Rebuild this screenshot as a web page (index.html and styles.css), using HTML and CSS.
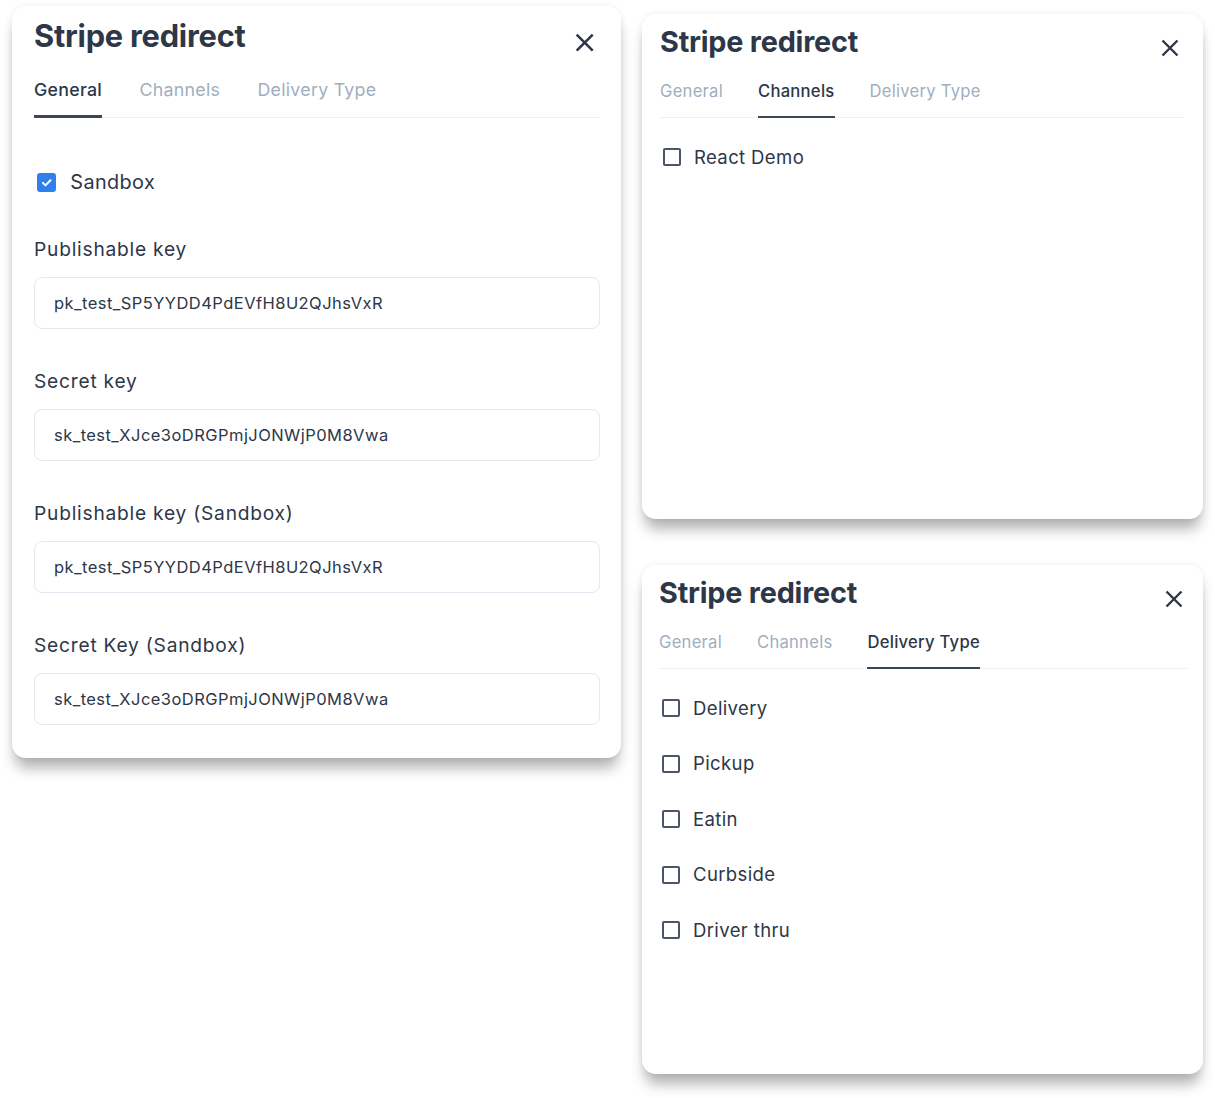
FILE: index.html
```html
<!DOCTYPE html>
<html lang="en">
<head>
<meta charset="utf-8">
<title>Stripe redirect</title>
<link rel="stylesheet" href="styles.css">
</head>
<body>
<div class="canvas">
  <section class="panel panel--lg panel--general">
    <header class="panel-head">
      <h2 class="panel-title">Stripe redirect</h2>
      <button class="close" aria-label="Close">
        <svg viewBox="0 0 20 20" width="100%" height="100%"><path d="M2.5 2.5L17.5 17.5M17.5 2.5L2.5 17.5" stroke="currentColor" stroke-width="2.4" fill="none"/></svg>
      </button>
    </header>
    <nav class="tabs">
      <span class="tab is-active">General</span>
      <span class="tab">Channels</span>
      <span class="tab">Delivery Type</span>
    </nav>
    <div class="general-body">
      <label class="check-row sandbox">
        <span class="check-wrap"><span class="box is-checked">
          <svg viewBox="0 0 12 12" width="100%" height="100%"><path d="M2.6 6.2L5 8.5L9.5 3.8" stroke="#fff" stroke-width="1.8" fill="none" stroke-linecap="round" stroke-linejoin="round"/></svg>
        </span></span>
        <span class="check-text">Sandbox</span>
      </label>
      <div class="fields">
        <div class="field">
          <div class="field-label">Publishable key</div>
          <div class="field-input">pk_test_SP5YYDD4PdEVfH8U2QJhsVxR</div>
        </div>
        <div class="field">
          <div class="field-label">Secret key</div>
          <div class="field-input">sk_test_XJce3oDRGPmjJONWjP0M8Vwa</div>
        </div>
        <div class="field">
          <div class="field-label">Publishable key (Sandbox)</div>
          <div class="field-input">pk_test_SP5YYDD4PdEVfH8U2QJhsVxR</div>
        </div>
        <div class="field">
          <div class="field-label">Secret Key (Sandbox)</div>
          <div class="field-input">sk_test_XJce3oDRGPmjJONWjP0M8Vwa</div>
        </div>
      </div>
    </div>
  </section>

  <div class="stack">
    <section class="panel panel--channels">
      <header class="panel-head">
        <h2 class="panel-title">Stripe redirect</h2>
        <button class="close" aria-label="Close">
          <svg viewBox="0 0 20 20" width="100%" height="100%"><path d="M2.5 2.5L17.5 17.5M17.5 2.5L2.5 17.5" stroke="currentColor" stroke-width="2.4" fill="none"/></svg>
        </button>
      </header>
      <nav class="tabs">
        <span class="tab">General</span>
        <span class="tab is-active">Channels</span>
        <span class="tab">Delivery Type</span>
      </nav>
      <div class="list">
        <label class="check-row"><span class="check-wrap"><span class="box"></span></span><span class="check-text">React Demo</span></label>
      </div>
    </section>

    <section class="panel panel--delivery">
      <header class="panel-head">
        <h2 class="panel-title">Stripe redirect</h2>
        <button class="close" aria-label="Close">
          <svg viewBox="0 0 20 20" width="100%" height="100%"><path d="M2.5 2.5L17.5 17.5M17.5 2.5L2.5 17.5" stroke="currentColor" stroke-width="2.4" fill="none"/></svg>
        </button>
      </header>
      <nav class="tabs">
        <span class="tab">General</span>
        <span class="tab">Channels</span>
        <span class="tab is-active">Delivery Type</span>
      </nav>
      <div class="list">
        <label class="check-row"><span class="check-wrap"><span class="box"></span></span><span class="check-text">Delivery</span></label>
        <label class="check-row"><span class="check-wrap"><span class="box"></span></span><span class="check-text">Pickup</span></label>
        <label class="check-row"><span class="check-wrap"><span class="box"></span></span><span class="check-text">Eatin</span></label>
        <label class="check-row"><span class="check-wrap"><span class="box"></span></span><span class="check-text">Curbside</span></label>
        <label class="check-row"><span class="check-wrap"><span class="box"></span></span><span class="check-text">Driver thru</span></label>
      </div>
    </section>
  </div>
</div>
</body>
</html>
```

FILE: styles.css
```css
* { box-sizing: border-box; }

html, body {
  margin: 0;
  padding: 0;
  background: #ffffff;
}

body {
  width: 1215px;
  height: 1098px;
  overflow: hidden;
  font-family: "Inter", "Noto Sans", sans-serif;
  color: #2d3748;
}

.canvas {
  display: flex;
  align-items: flex-start;
  gap: 21px;
  padding: 6px 0 0 12px;
}

.stack {
  display: flex;
  flex-direction: column;
  gap: 46px;
  width: 561px;
  margin-top: 8px;
}

.panel {
  background: #ffffff;
  border-radius: 14px;
  box-shadow: 0 13px 14px -3px rgba(0, 0, 0, 0.3), 0 0 6px rgba(0, 0, 0, 0.07);
  font-size: 16px;
  padding: 0.375em 19px 0 18px;
}

.panel--lg {
  font-size: 17.1px;
  width: 609px;
  height: 752px;
  padding: 0.375em 21px 0 22px;
}

.panel--channels { height: 505px; }
.panel--delivery { height: 509px; padding-left: 17px; padding-right: 15px; }

.panel-head {
  display: flex;
  justify-content: space-between;
  align-items: flex-start;
}

.panel-title {
  margin: 0;
  font-size: 1.8em;
  line-height: 1.528;
  font-weight: 700;
  letter-spacing: -0.007em;
  color: #2d3748;
}

.close {
  font: inherit;
  border: 0;
  background: none;
  padding: 0;
  width: 1.25em;
  height: 1.25em;
  margin-top: 1.125em;
  margin-right: 0.25em;
  color: #2d3748;
}

.close svg { display: block; }

.tabs {
  display: flex;
  gap: 2.1875em;
  margin-top: 1em;
  border-bottom: 1px solid #edf0f4;
}

.tab {
  font-size: 1.04em;
  letter-spacing: 0.015em;
  line-height: 1.44;
  padding-bottom: 0.72em;
  border-bottom: 0.18em solid transparent;
  margin-bottom: -1px;
  color: #a0aec0;
  font-weight: 400;
}

.tab.is-active {
  color: #2d3748;
  font-weight: 500;
  border-bottom-color: #3b4656;
}

.check-row {
  display: flex;
  align-items: center;
  gap: 0.556em;
  font-size: 1.125em;
  line-height: 1.333;
}

.check-wrap {
  width: 1.333em;
  height: 1.333em;
  display: flex;
  align-items: center;
  justify-content: center;
}

.box {
  width: 1em;
  height: 1em;
  border: 2px solid #4a5568;
  border-radius: 2px;
  display: block;
}

.box.is-checked {
  background: #2f80ed;
  border-color: #2f80ed;
  border-radius: 3px;
  padding: 1px;
}

.box.is-checked svg { display: block; }

.check-text {
  color: #2d3748;
  font-size: 1.03em;
  letter-spacing: 0.02em;
}

.list {
  display: flex;
  flex-direction: column;
  gap: 30.75px;
  margin-top: 27px;
}

.general-body { margin-top: 51px; }

.fields {
  display: flex;
  flex-direction: column;
  gap: 40px;
  margin-top: 42px;
}

.field {
  display: flex;
  flex-direction: column;
  gap: 16px;
}

.field-label {
  font-size: 19.2px;
  letter-spacing: 0.04em;
  line-height: 24px;
  color: #2d3748;
}

.field-input {
  height: 52px;
  border: 1px solid #e2e8f0;
  border-radius: 8px;
  padding: 0 19px;
  display: flex;
  align-items: center;
  font-size: 16.5px;
  letter-spacing: 0.027em;
  color: #2d3748;
}
```
